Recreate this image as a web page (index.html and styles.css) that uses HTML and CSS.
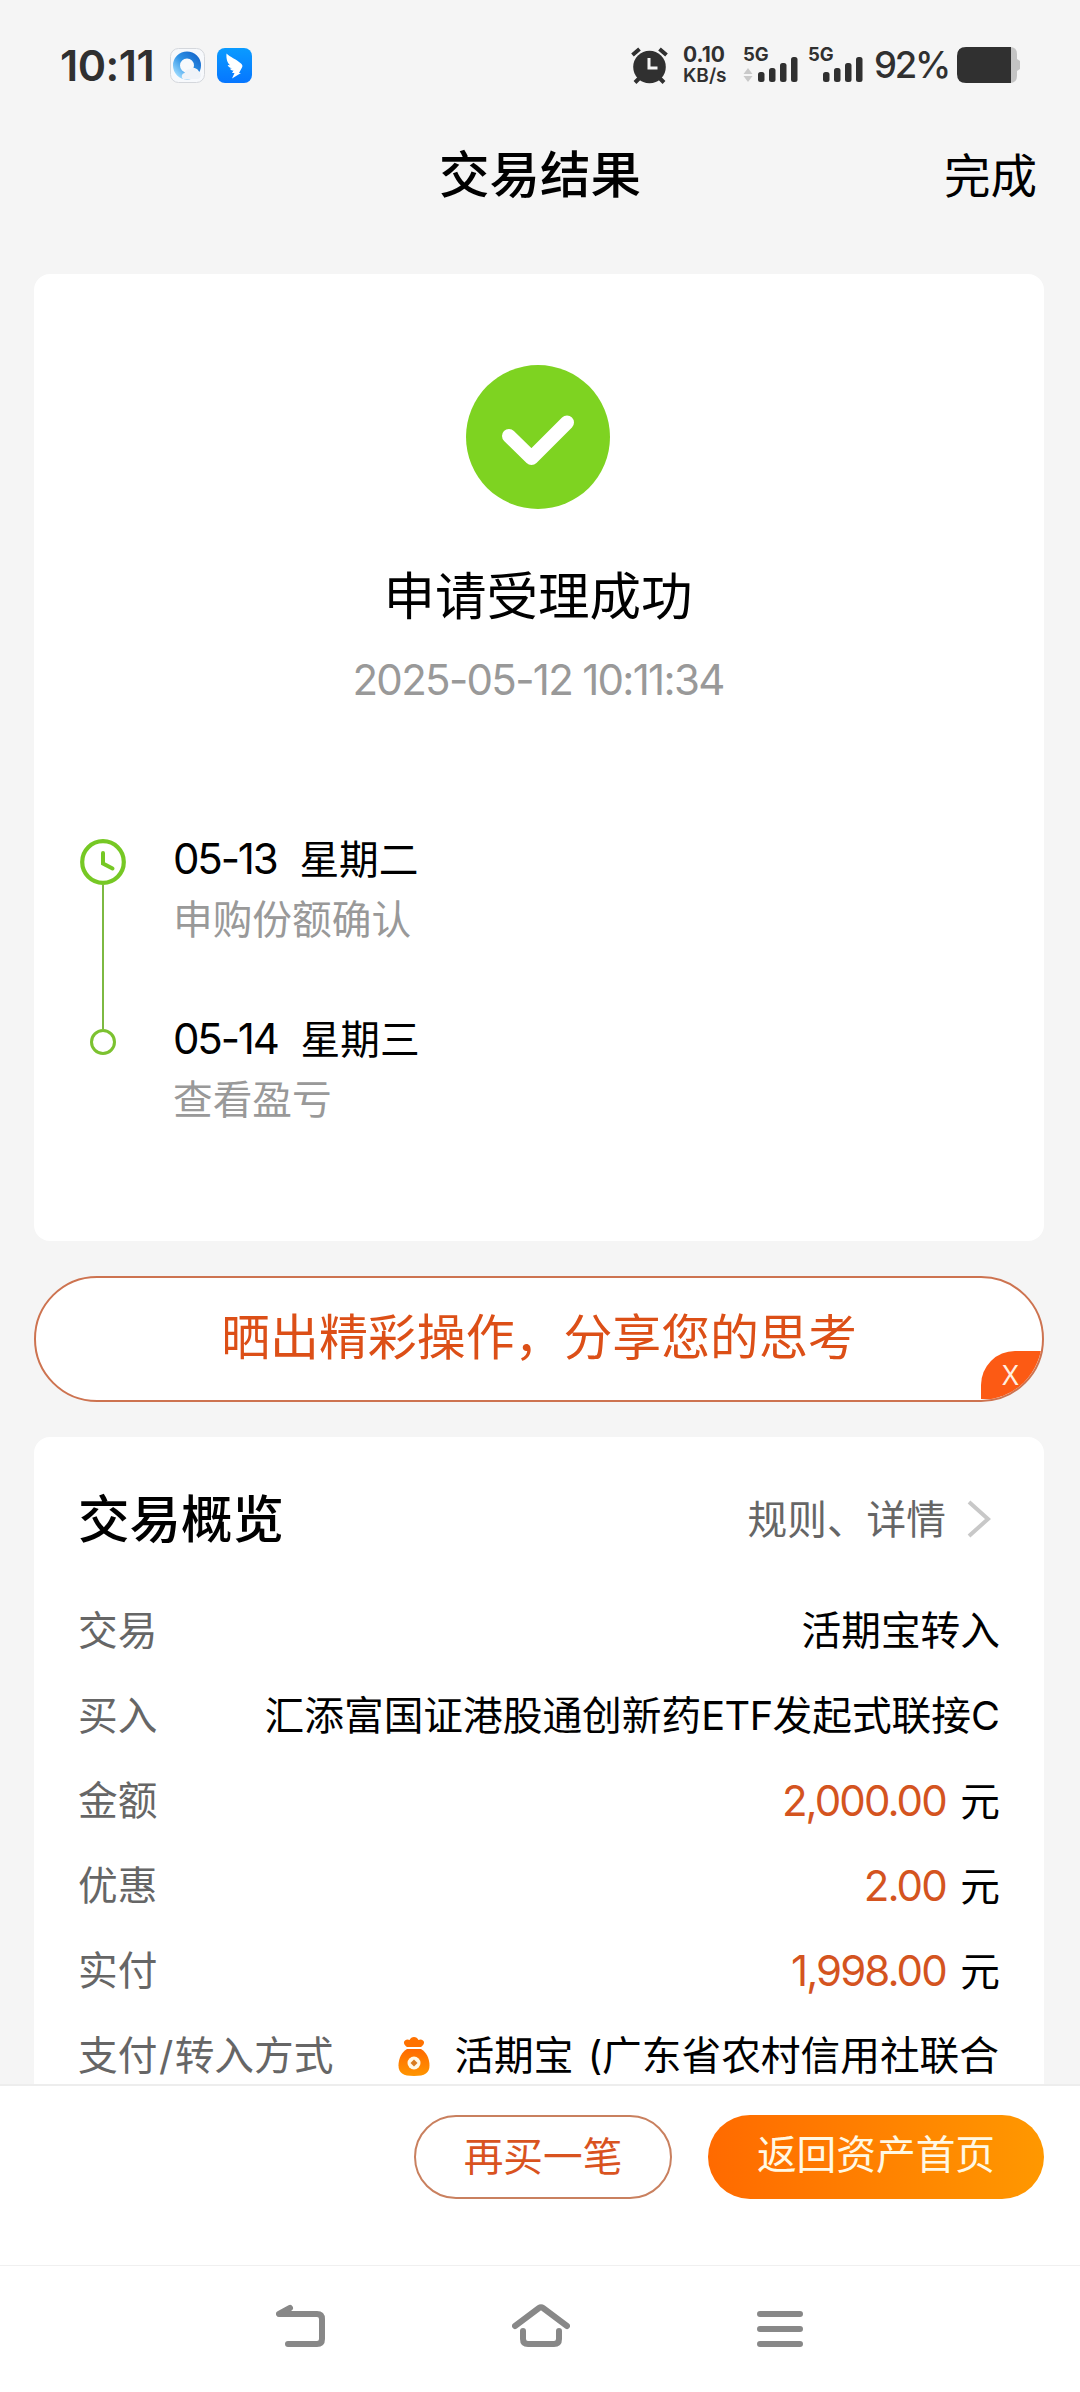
FILE: index.html
```html
<!DOCTYPE html>
<html lang="zh-CN">
<head>
    <meta charset="UTF-8">
    <meta name="viewport" content="width=device-width, initial-scale=1.0">
    <title>交易结果</title>
    <link rel="stylesheet" href="styles.css">
</head>
<body>
    <div class="statusbar">
        <span class="time">10:11</span>
        <svg class="app-icon" width="35" height="35" viewBox="0 0 35 35">
            <defs>
                <linearGradient id="ring" x1="1" y1="0" x2="0" y2="1">
                    <stop offset="0" stop-color="#1668cc"/>
                    <stop offset="0.5" stop-color="#2f93e6"/>
                    <stop offset="1" stop-color="#9fdcff"/>
                </linearGradient>
            </defs>
            <rect x="0.5" y="0.5" width="34" height="34" rx="8" fill="#f7f9fc" stroke="#d4d7dc"/>
            <circle cx="17" cy="17.5" r="10.500" fill="none" stroke="url(#ring)" stroke-width="7"/>
            <path d="M13 31h14a4 4 0 0 0 2-7.500a6 6 0 0 0-9.500-2a4.500 4.500 0 0 0-5 3.500a3.400 3.400 0 0 0-1.500 6z" fill="#eff3f8"/>
        </svg>
        <svg class="app-icon ding" width="35" height="35" viewBox="0 0 35 35">
            <defs>
                <linearGradient id="blue" x1="0" y1="0" x2="0" y2="1">
                    <stop offset="0" stop-color="#0a9bff"/>
                    <stop offset="1" stop-color="#0676ff"/>
                </linearGradient>
            </defs>
            <rect width="35" height="35" rx="8" fill="url(#blue)"/>
            <path d="M9.500 5.500C13 9 19 11 24 15.500c1.500 1.500 1.800 2.500 1 4L22 25h2l-9 5.500 2.500-5.500h-2.500l1.500-2.500c-2 0-3-.6-3.500-2l2 0c-2.500-.8-4-2-4.300-3.500l2.300.3c-2.500-2.500-4-6-3.500-11.800z" fill="#fff"/>
        </svg>
        <div class="status-right">
            <svg width="37" height="37" viewBox="0 0 37 37">
                <circle cx="18.500" cy="20" r="16.300" fill="#303030"/>
                <path d="M1.500 8l7-6M35.500 8l-7-6M4 35.500l5-5M33 35.500l-5-5" stroke="#303030" stroke-width="4" fill="none"/>
                <path d="M18 11v10h8.500" stroke="#f5f5f5" stroke-width="3" fill="none"/>
            </svg>
            <div class="speed"><span>0.10</span><span class="unit">KB/s</span></div>
            <div class="signal">
                <span>5G</span>
                <svg width="55" height="26" viewBox="0 0 55 26">
                    <path d="M5 11l4.500 6h-9zM5 25l4.500-6h-9z" fill="#c9c9c9"/>
                    <g fill="#303030">
                        <rect x="15" y="15" width="6.500" height="10" rx="2.500"/>
                        <rect x="26" y="11" width="6.500" height="14" rx="2.500"/>
                        <rect x="37" y="6" width="6.500" height="19" rx="2.500"/>
                        <rect x="48" y="0" width="6.500" height="25" rx="2.500"/>
                    </g>
                </svg>
            </div>
            <div class="signal">
                <span>5G</span>
                <svg width="55" height="26" viewBox="0 0 55 26">
                    <g fill="#303030">
                        <rect x="15" y="15" width="6.500" height="10" rx="2.500"/>
                        <rect x="26" y="11" width="6.500" height="14" rx="2.500"/>
                        <rect x="37" y="6" width="6.500" height="19" rx="2.500"/>
                        <rect x="48" y="0" width="6.500" height="25" rx="2.500"/>
                    </g>
                </svg>
            </div>
            <span class="percent">92%</span>
            <svg width="63" height="36" viewBox="0 0 63 36">
                <path d="M50 0h3q7 0 7 7v5l3 2v8l-3 2v5q0 7-7 7h-3z" fill="#c4c4c4"/>
                <path d="M54 0v36H9q-9 0-9-9V9q0-9 9-9z" fill="#303030"/>
            </svg>
        </div>
    </div>

    <header class="header">
        <h1>交易结果</h1>
        <a class="done">完成</a>
    </header>

    <main class="content">
        <section class="card result">
            <svg class="check" width="144" height="144" viewBox="0 0 144 144">
                <circle cx="72" cy="72" r="72" fill="#7ed321"/>
                <path d="M43 71l22.500 22L101 57.500" fill="none" stroke="#fff" stroke-width="14" stroke-linecap="round" stroke-linejoin="round"/>
            </svg>
            <h2>申请受理成功</h2>
            <p class="date">2025-05-12 10:11:34</p>
            <div class="timeline">
                <div class="rail">
                    <svg width="46" height="46" viewBox="0 0 46 46" fill="none" stroke="#76c824">
                        <circle cx="23" cy="23" r="20.800" stroke-width="4.200"/>
                        <path d="M23 14v10.500l9.500 5" stroke-width="4" stroke-linecap="round"/>
                    </svg>
                    <i class="line"></i>
                    <i class="dot"></i>
                </div>
                <div class="steps">
                    <div class="step">
                        <p class="day"><span>05-13</span>星期二</p>
                        <p class="note">申购份额确认</p>
                    </div>
                    <div class="step">
                        <p class="day"><span>05-14</span>星期三</p>
                        <p class="note">查看盈亏</p>
                    </div>
                </div>
            </div>
        </section>

        <div class="share">
            晒出精彩操作，分享您的思考
            <span class="close">X</span>
        </div>

        <section class="card overview">
            <div class="overview-head">
                <h3>交易概览</h3>
                <a class="more"><span>规则、详情</span>
                    <svg width="24" height="38" viewBox="0 0 24 38"><path d="M2 2l19 17L2 36" fill="none" stroke="#c8c8c8" stroke-width="4"/></svg>
                </a>
            </div>
            <div class="row"><span class="label">交易</span><span class="value">活期宝转入</span></div>
            <div class="row"><span class="label">买入</span><span class="value">汇添富国证港股通创新药<span class="latin">ETF</span>发起式联接C</span></div>
            <div class="row"><span class="label">金额</span><span class="value"><b class="money">2,000.00</b>元</span></div>
            <div class="row"><span class="label">优惠</span><span class="value"><b class="money">2.00</b>元</span></div>
            <div class="row"><span class="label">实付</span><span class="value"><b class="money">1,998.00</b>元</span></div>
            <div class="row">
                <span class="label">支付<span class="slash">/</span>转入方式</span>
                <span class="value pay">
                    <svg width="32" height="40" viewBox="0 0 32 40">
                        <defs>
                            <linearGradient id="bag" x1="0" y1="0" x2="0" y2="1">
                                <stop offset="0" stop-color="#ff6a00"/>
                                <stop offset="1" stop-color="#ff9500"/>
                            </linearGradient>
                        </defs>
                        <path d="M9 10C6 8 5 5 7 3.500q2-1.500 4.500-.5Q13 0 16 0t4.500 3q2.500-1 4.500.5c2 1.500 1 4.500-2 6.500z" fill="#ff7200"/>
                        <path d="M9 12h14c5 3 8.500 9 8.500 16.500C31.500 36 27 39 16 39S.5 36 .5 28.500C.5 21 4 15 9 12z" fill="url(#bag)"/>
                        <circle cx="16" cy="26" r="6.500" fill="#fff8e6"/>
                        <path d="M16 22.500l3.500 3.500-3.500 3.500-3.500-3.500z" fill="#d87b20"/>
                    </svg>
                    活期宝 (广东省农村信用社联合
                </span>
            </div>
        </section>
    </main>

    <footer class="actions">
        <button class="btn outline">再买一笔</button>
        <button class="btn primary">返回资产首页</button>
    </footer>

    <nav class="navbar">
        <svg width="49" height="44" viewBox="0 0 49 44"><path d="M14 4L3 10h38q5 0 5 5v20q0 5-5 5H12" /></svg>
        <svg width="58" height="44" viewBox="0 0 58 44"><path d="M3 22L27 4q2-1.500 4 0l24 18M11 27v8q0 5 5 5h26q5 0 5-5v-8" /></svg>
        <svg width="46" height="44" viewBox="0 0 46 44"><path d="M3 10h40M3 25h40M3 40h40" /></svg>
    </nav>
</body>
</html>
```
FILE: styles.css
```css
* {
    box-sizing: border-box;
    margin: 0;
    padding: 0;
}
body {
    width: 1080px;
    height: 2392px;
    display: flex;
    flex-direction: column;
    background-color: #f5f5f5;
    color: #000;
    font-family: Inter, "Noto Sans CJK SC", sans-serif;
    font-size: 39.7px;
    overflow: hidden;
}
svg {
    display: block;
    flex: none;
}

/* status bar */
.statusbar {
    height: 130px;
    flex: none;
    display: flex;
    align-items: center;
    padding: 0 60px;
    color: #303030;
}
.time {
    width: 110px;
    font-size: 43px;
    font-weight: 600;
    letter-spacing: -0.5px;
}
.ding {
    margin-left: 12px;
}
.status-right {
    display: flex;
    align-items: center;
    margin-left: auto;
}
.speed {
    width: 44px;
    margin-left: 15px;
    display: flex;
    flex-direction: column;
    font-size: 21px;
    font-weight: 700;
    line-height: 21px;
}
.unit {
    font-size: 19px;
    font-weight: 600;
}
.signal {
    width: 55px;
    height: 36px;
    margin-left: 16px;
    position: relative;
    display: flex;
    align-items: flex-end;
}
.signal + .signal {
    margin-left: 10px;
}
.signal span {
    position: absolute;
    left: 0;
    top: -2px;
    font-size: 18.500px;
    font-weight: 700;
    line-height: 18px;
}
.percent {
    width: 76px;
    margin: 0 7px 0 11px;
    font-size: 36.500px;
    font-weight: 500;
    letter-spacing: -2.2px;
}

/* title bar */
.header {
    height: 90px;
    flex: none;
    display: grid;
    grid-template-columns: 1fr auto 1fr;
    align-items: center;
    padding: 0 43px 0 43px;
}
.header h1 {
    grid-column: 2;
    font-size: 50.500px;
    font-weight: 500;
    line-height: 86px;
}
.done {
    justify-self: end;
    font-size: 46.500px;
    padding-bottom: 5px;
}

.content {
    height: 1864px;
    flex: none;
    padding: 54px 36px 0 34px;
    overflow: hidden;
}
.card {
    background-color: #fff;
    border-radius: 16px;
}

/* result */
.result {
    height: 967px;
    padding: 91px 47px 0 45px;
    display: flex;
    flex-direction: column;
    align-items: center;
}
.result h2 {
    margin-top: 52px;
    font-size: 51.500px;
    font-weight: 400;
    line-height: 70px;
}
.date {
    margin-top: 24px;
    font-size: 42px;
    line-height: 50px;
    letter-spacing: -1.7px;
    color: #999;
}
.timeline {
    align-self: stretch;
    margin-top: 129px;
    display: flex;
}
.rail {
    width: 46px;
    margin: 5px 47px 0 1px;
    display: flex;
    flex-direction: column;
    align-items: center;
}
.line {
    width: 2px;
    height: 144px;
    background-color: #7db942;
}
.dot {
    width: 26px;
    height: 26px;
    border: 3px solid #7cc230;
    border-radius: 50%;
}
.step {
    height: 180px;
    line-height: 50px;
}
.day span {
    font-size: 42px;
    letter-spacing: -2.2px;
    margin-right: 23px;
}
.note {
    margin-top: 10px;
    color: #999;
}

/* share */
.share {
    position: relative;
    height: 126px;
    margin: 35px 0;
    border: 2px solid #cd7350;
    border-radius: 63px;
    background-color: #fff;
    overflow: hidden;
    text-align: center;
    font-size: 48.900px;
    line-height: 120px;
    color: #dc4f17;
}
.close {
    position: absolute;
    right: 0;
    bottom: 1px;
    width: 61px;
    height: 48px;
    padding-right: 2px;
    border-radius: 34px 0 0 0;
    background-color: #fc5a14;
    font-family: "Noto Sans", sans-serif;
    font-size: 28px;
    line-height: 47px;
    color: #fff0e0;
}

/* overview */
.overview {
    height: 700px;
    padding: 40px 44px 0;
}
.overview-head {
    height: 84px;
    margin-bottom: 28px;
    display: flex;
    align-items: center;
    justify-content: space-between;
}
.overview-head h3 {
    font-size: 51.500px;
    font-weight: 500;
    line-height: 84px;
}
.more {
    display: flex;
    align-items: center;
    gap: 21px;
    padding-right: 9px;
    color: #666;
}
.more span {
    padding-bottom: 5px;
}
.row {
    height: 85px;
    display: flex;
    align-items: center;
    justify-content: space-between;
    line-height: 85px;
    white-space: nowrap;
}
.label {
    color: #666;
}
.slash {
    margin: 0 1.500px;
}
.latin {
    letter-spacing: -0.5px;
}
.money {
    margin-right: 14.500px;
    font-size: 42px;
    font-weight: 400;
    letter-spacing: -1.9px;
    color: #d4541f;
}
.pay {
    display: flex;
    align-items: center;
    gap: 24px;
    padding-right: 1px;
    word-spacing: 3px;
}

/* bottom buttons */
.actions {
    height: 181px;
    flex: none;
    display: flex;
    justify-content: flex-end;
    gap: 36px;
    padding: 29px 36px 0;
    border-top: 2px solid #ededed;
    background-color: #fff;
}
.btn {
    height: 84px;
    border: none;
    border-radius: 42px;
    font-family: inherit;
    font-size: 39.7px;
    line-height: 80px;
    padding-bottom: 4px;
}
.outline {
    width: 258px;
    border: 2px solid #c9805f;
    background-color: #fff;
    color: #d9531f;
}
.primary {
    width: 336px;
    background: linear-gradient(90deg, #ff6a00, #ff9800);
    color: #fff8e4;
}

/* system navigation */
.navbar {
    flex: 1;
    display: flex;
    gap: 187px;
    padding: 38px 0 0 276px;
    border-top: 1px solid #f0f0f0;
    background-color: #fff;
}
.navbar path {
    fill: none;
    stroke: #888;
    stroke-width: 6;
    stroke-linecap: round;
    stroke-linejoin: round;
}
```
